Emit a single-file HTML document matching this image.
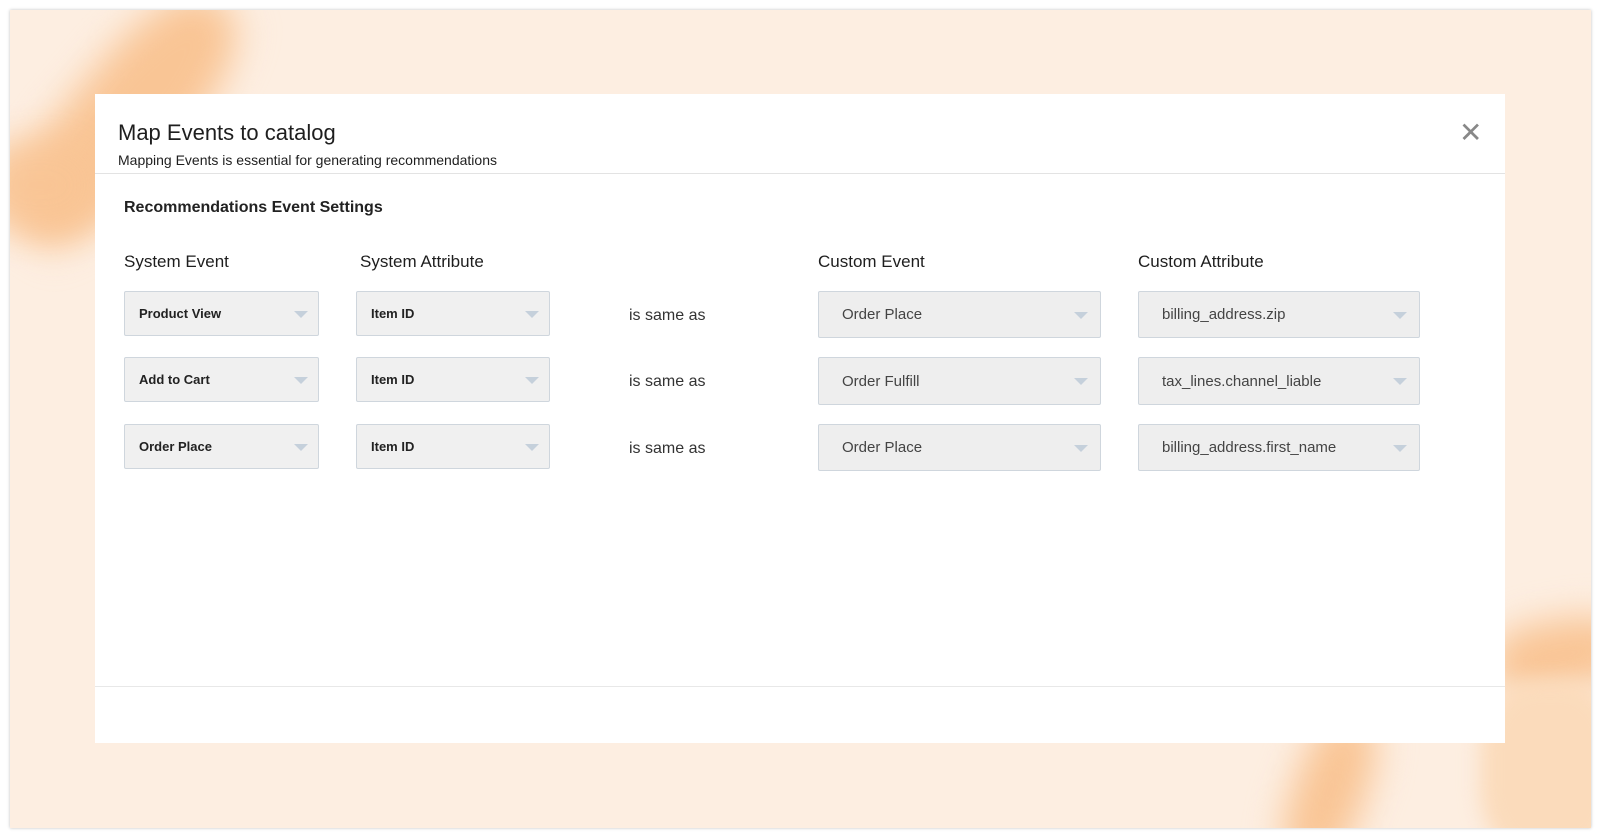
<!DOCTYPE html>
<html><head><meta charset="utf-8"><style>
*{margin:0;padding:0;box-sizing:border-box}
body{width:1600px;height:838px;background:#fff;position:relative;overflow:hidden;font-family:"Liberation Sans",sans-serif;color:#1e1e1e}
.frame{position:absolute;left:10px;top:10px;width:1581px;height:818px;background:#fdeee1;overflow:hidden;box-shadow:0 0 3px rgba(0,0,0,.25)}
.blob{position:absolute;background:#f9c595;filter:blur(18px);border-radius:40%}
.modal{position:absolute;left:95px;top:94px;width:1410px;height:649px;background:#fff}
.t{position:absolute;white-space:nowrap}
.dd{position:absolute;background:#f0f0f0;border:1px solid #cfd6dd;border-radius:2px;font-size:13px;font-weight:bold;color:#222;display:flex;align-items:center;padding-left:14px}
.dd.c{background:#eeeeee;font-weight:normal;font-size:15px;color:#444;padding-left:23px}
.dd:after{content:"";position:absolute;right:10px;top:50%;margin-top:-3px;border-left:7px solid transparent;border-right:7px solid transparent;border-top:7px solid #c5d0db}
.dd.c:after{right:12px}
</style></head><body>
<div class="frame">
<div class="blob" style="left:60px;top:-40px;width:110px;height:300px;transform:rotate(40deg)"></div>
<div class="blob" style="left:-30px;top:130px;width:120px;height:90px;opacity:.9"></div>
<div class="blob" style="left:1285px;top:700px;width:70px;height:160px;transform:rotate(20deg)"></div>
<div class="blob" style="left:1480px;top:610px;width:140px;height:70px;transform:rotate(-10deg)"></div>
<div class="blob" style="left:1470px;top:670px;width:140px;height:180px;background:#fbdbbb;filter:blur(10px)"></div>
</div>
<div class="modal">
<div class="t" style="left:23px;top:26px;font-size:22px;font-weight:500">Map Events to catalog</div>
<div class="t" style="left:23px;top:58px;font-size:14px">Mapping Events is essential for generating recommendations</div>
<div class="t" style="left:1364px;top:22px;font-size:28px;color:#888">✕</div>
<div style="position:absolute;left:0;top:79px;width:100%;height:1px;background:#e3e3e3"></div>
<div class="t" style="left:29px;top:105px;font-size:16px;font-weight:bold;color:#222">Recommendations Event Settings</div>
<div class="t" style="left:29px;top:158px;font-size:17px">System Event</div>
<div class="t" style="left:265px;top:158px;font-size:17px">System Attribute</div>
<div class="t" style="left:723px;top:158px;font-size:17px">Custom Event</div>
<div class="t" style="left:1043px;top:158px;font-size:17px">Custom Attribute</div>

<div class="dd" style="left:29px;top:197px;width:195px;height:45px">Product View</div>
<div class="dd" style="left:261px;top:197px;width:194px;height:45px">Item ID</div>
<div class="t" style="left:534px;top:213px;font-size:16px;color:#333">is same as</div>
<div class="dd c" style="left:723px;top:197px;width:283px;height:47px">Order Place</div>
<div class="dd c" style="left:1043px;top:197px;width:282px;height:47px">billing_address.zip</div>

<div class="dd" style="left:29px;top:263px;width:195px;height:45px">Add to Cart</div>
<div class="dd" style="left:261px;top:263px;width:194px;height:45px">Item ID</div>
<div class="t" style="left:534px;top:279px;font-size:16px;color:#333">is same as</div>
<div class="dd c" style="left:723px;top:263px;width:283px;height:48px">Order Fulfill</div>
<div class="dd c" style="left:1043px;top:263px;width:282px;height:48px">tax_lines.channel_liable</div>

<div class="dd" style="left:29px;top:330px;width:195px;height:45px">Order Place</div>
<div class="dd" style="left:261px;top:330px;width:194px;height:45px">Item ID</div>
<div class="t" style="left:534px;top:346px;font-size:16px;color:#333">is same as</div>
<div class="dd c" style="left:723px;top:330px;width:283px;height:47px">Order Place</div>
<div class="dd c" style="left:1043px;top:330px;width:282px;height:47px">billing_address.first_name</div>

<div style="position:absolute;left:0;top:592px;width:100%;height:1px;background:#e8e8e8"></div>
</div>
</body></html>
